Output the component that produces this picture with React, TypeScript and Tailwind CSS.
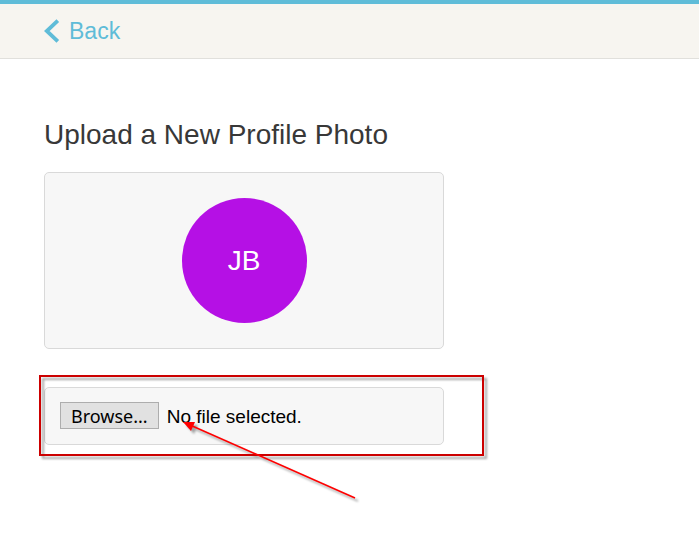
import { useRef, useState } from "react";

/* --- header with the back link --- */
function Header() {
  return (
    <header className="border-t-4 border-b border-t-[#5fbcd8] border-b-[#e1e0dc] bg-[#f7f5f0] px-11">
      <a
        href="#back"
        className="inline-flex h-[54px] items-center gap-2 text-[23px] text-[#5fbcd8]"
      >
        <svg width="17" height="24" viewBox="0 0 17 24" fill="none" aria-hidden="true">
          <path d="M13.8 1.6 L2.8 12 L13.8 22.4" stroke="currentColor" strokeWidth="3.8" />
        </svg>
        Back
      </a>
    </header>
  );
}

/* --- red box and arrow drawn over the file picker --- */
function Callout() {
  return (
    <div className="pointer-events-none absolute -top-[13px] -right-[41px] -bottom-3 -left-1.5 border-2 border-[#cc0000] drop-shadow-[3px_3px_1px_rgba(0,0,0,0.35)]">
      <svg
        className="absolute top-[42px] left-[141px]"
        width="180"
        height="86"
        viewBox="0 0 180 86"
        aria-hidden="true"
      >
        <path d="M8 6 L173 79" stroke="#ff0000" strokeWidth="1.6" />
        <path d="M1 3 L13 3 L9 12 Z" fill="#ff0000" />
      </svg>
    </div>
  );
}

function FilePicker() {
  const inputRef = useRef<HTMLInputElement | null>(null);
  const [fileName, setFileName] = useState("");

  return (
    <div className="relative flex items-center gap-2 rounded-[5px] border border-[#d9d9d9] bg-[#f7f7f7] px-[15px] pt-[14px] pb-[15px]">
      <input
        ref={inputRef}
        type="file"
        accept="image/*"
        aria-label="Profile photo"
        className="hidden"
        onChange={(e) => setFileName(e.target.files?.[0]?.name ?? "")}
      />
      <button
        type="button"
        onClick={() => inputRef.current?.click()}
        className="h-[27px] border border-[#adadad] bg-[#e1e1e1] px-2.5 pt-0.5 font-['Noto_Sans',sans-serif] text-[18px] leading-[23px] text-black"
      >
        Browse...
      </button>
      <span className="pt-0.5 text-[19px] leading-[25px] text-black">
        {fileName || "No file selected."}
      </span>
      <Callout />
    </div>
  );
}

export default function App() {
  return (
    <div className="min-h-screen bg-white font-['Liberation_Sans',Arial,sans-serif]">
      <Header />
      <main className="px-11 pt-14">
        <h1 className="text-[28px] leading-10 text-[#383838]">
          Upload a New Profile Photo
        </h1>
        <div className="mt-[17px] flex max-w-[400px] flex-col gap-[38px]">
          <div className="flex justify-center rounded-[5px] border border-[#d9d9d9] bg-[#f7f7f7] py-[25px]">
            <div className="flex size-[125px] items-center justify-center rounded-full bg-[#b510e5] text-[28px] text-white">
              JB
            </div>
          </div>
          <FilePicker />
        </div>
      </main>
    </div>
  );
}
